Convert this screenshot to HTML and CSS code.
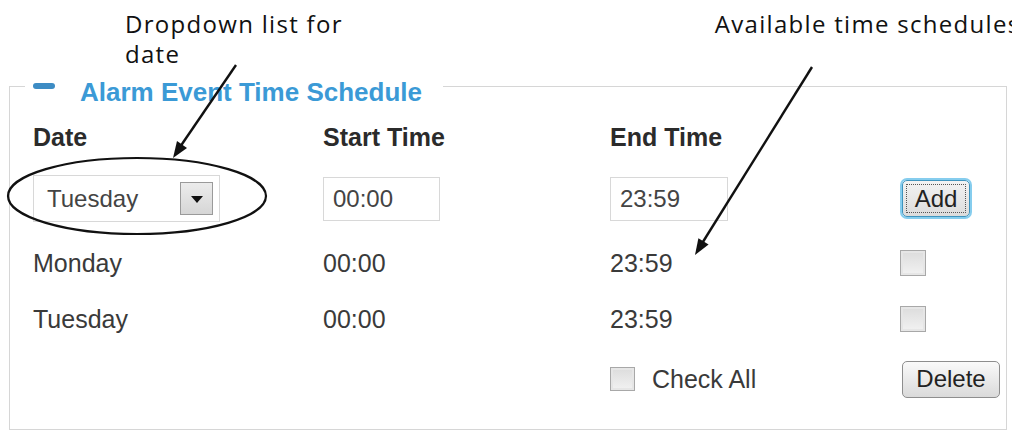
FILE: index.html
```html
<!DOCTYPE html>
<html lang="en">
<head>
<meta charset="utf-8">
<title>Alarm Event Time Schedule</title>
<link rel="stylesheet" href="styles.css">
</head>
<body>
<div class="page">
  <div class="notes">
    <p class="note note-date">Dropdown list for<br>date</p>
    <p class="note note-sched">Available time schedules</p>
  </div>

  <fieldset class="panel">
    <legend class="panel-title"><span class="collapse-icon"></span>Alarm Event Time Schedule</legend>
    <div class="sched-grid">
      <div class="th">Date</div>
      <div class="th">Start Time</div>
      <div class="th">End Time</div>
      <div></div>

      <div>
        <div class="select">
          <span class="select-value">Tuesday</span>
          <span class="select-btn"><span class="tri"></span></span>
        </div>
      </div>
      <div><input class="time-input t-start" type="text" value="00:00"></div>
      <div><input class="time-input t-end" type="text" value="23:59"></div>
      <div><button class="btn btn-add" type="button">Add</button></div>

      <div class="td">Monday</div>
      <div class="td">00:00</div>
      <div class="td">23:59</div>
      <div><span class="chk"></span></div>

      <div class="td">Tuesday</div>
      <div class="td">00:00</div>
      <div class="td">23:59</div>
      <div><span class="chk"></span></div>

      <div></div>
      <div></div>
      <div class="check-all"><span class="chk chk-sm"></span><span class="td">Check All</span></div>
      <div><button class="btn btn-delete" type="button">Delete</button></div>
    </div>
  </fieldset>

  <svg class="overlay" width="1012" height="431" viewBox="0 0 1012 431" aria-hidden="true">
    <ellipse cx="137" cy="196" rx="129" ry="38" fill="none" stroke="#111" stroke-width="2.2"/>
    <line x1="236" y1="65" x2="180" y2="147" stroke="#111" stroke-width="2.4"/>
    <polygon points="173,158 187,148 177,141" fill="#111"/>
    <line x1="812" y1="67" x2="701" y2="245" stroke="#111" stroke-width="2.4"/>
    <polygon points="695,255 708.6,244.6 698.4,238.2" fill="#111"/>
  </svg>
</div>
</body>
</html>
```

FILE: styles.css
```css
html, body {
  margin: 0;
  padding: 0;
  background: #fff;
}

body {
  width: 1012px;
  height: 431px;
  overflow: hidden;
  font-family: "Liberation Sans", Arial, sans-serif;
  color: #3a3a3a;
}

.page {
  position: relative;
  width: 1012px;
  height: 431px;
}

/* annotation texts */
.notes {
  display: flex;
  height: 66px;
  padding-top: 9px;
  box-sizing: border-box;
  font-family: "Open Sans", "Noto Sans", sans-serif;
  font-size: 24px;
  letter-spacing: 1.3px;
  line-height: 30px;
  color: #111;
}

.note {
  margin: 0;
  white-space: nowrap;
}

.note-date {
  margin-left: 125px;
}

.note-sched {
  margin-left: 372px;
}

/* panel */
.panel {
  margin: 0 0 0 9px;
  width: 998px;
  box-sizing: border-box;
  height: 364px;
  border: 1px solid #d6d6d6;
  padding: 0 0 0 23px;
  min-inline-size: 0;
}

.panel-title {
  margin-left: -8px;
  padding: 11px 21px 0 8px;
  font-size: 26px;
  line-height: 30px;
  font-weight: bold;
  color: #3b9ad6;
  white-space: nowrap;
}

.collapse-icon {
  display: inline-block;
  width: 22px;
  height: 6px;
  border-radius: 3px;
  background: #3d8cc4;
  margin-right: 25px;
  vertical-align: 12px;
}

.sched-grid {
  display: grid;
  grid-template-columns: 290px 287px 290px 1fr;
  grid-template-rows: 50px 73px 56px 56px 64px;
  align-items: center;
  margin-top: 5px;
  font-size: 25px;
  line-height: 30px;
}

.th {
  font-weight: bold;
  color: #2b2b2b;
}

.td {
  color: #3a3a3a;
}

/* select mock */
.select {
  width: 187px;
  height: 47px;
  box-sizing: border-box;
  border: 1px solid #d8d8d8;
  display: flex;
  align-items: center;
  justify-content: space-between;
  padding: 0 6px 0 13px;
  background: #fff;
}

.select-value {
  color: #444;
  font-size: 24px;
}

.select-btn {
  width: 33px;
  height: 33px;
  box-sizing: border-box;
  border: 1px solid #9a9a9a;
  background: linear-gradient(#ececec, #d6d6d6);
  display: flex;
  align-items: center;
  justify-content: center;
}

.tri {
  width: 0;
  height: 0;
  border-left: 6px solid transparent;
  border-right: 6px solid transparent;
  border-top: 7px solid #111;
  margin-top: 2px;
}

/* inputs */
.time-input {
  box-sizing: border-box;
  height: 44px;
  border: 1px solid #d8d8d8;
  padding: 0 9px;
  font-family: "Liberation Sans", Arial, sans-serif;
  font-size: 24px;
  color: #444;
  background: #fff;
  outline: none;
}

.t-start {
  width: 117px;
}

.t-end {
  width: 118px;
}

/* buttons */
.btn {
  font-family: "Liberation Sans", Arial, sans-serif;
  font-size: 24px;
  color: #222;
  height: 37px;
  box-sizing: border-box;
  padding: 0;
  border-radius: 5px;
  cursor: pointer;
}

.btn-add {
  margin-left: 2px;
  width: 68px;
  border: 1px solid #3e94be;
  box-shadow: 0 0 0 2px #86cdee;
  background: linear-gradient(#f3f3f3, #dcdcdc);
  outline: 1px dotted #555;
  outline-offset: -5px;
}

.btn-delete {
  margin-left: 2px;
  width: 98px;
  border: 1px solid #8e8e8e;
  background: linear-gradient(#fafafa, #dadada);
}

/* checkboxes */
.chk {
  display: block;
  width: 26px;
  height: 26px;
  box-sizing: border-box;
  border: 1px solid #a8a8a8;
  background: linear-gradient(#dcdcdc, #f2f2f2);
  box-shadow: inset 0 0 0 2px #e6e6e6;
}

.chk-sm {
  width: 25px;
  height: 24px;
}

.check-all {
  display: flex;
  align-items: center;
  gap: 17px;
}

/* annotation overlay */
.overlay {
  position: absolute;
  left: 0;
  top: 0;
  pointer-events: none;
}
```
